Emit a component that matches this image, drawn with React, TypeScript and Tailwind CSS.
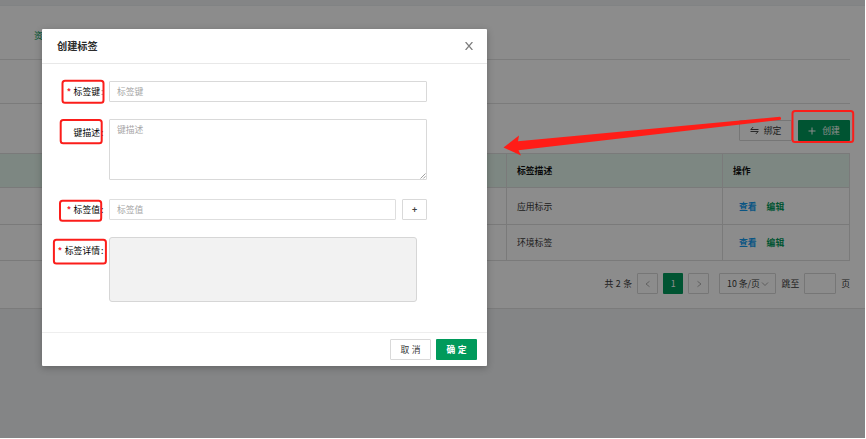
import type { ReactNode } from "react";

const rows = ["应用标示", "环境标签"];

function BackgroundPage() {
  return (
    <div className="flex h-[438px] w-[865px] flex-col overflow-hidden bg-[#f0f2f5] pt-1.5 text-[#383838]">
      <div className="flex h-[303px] shrink-0 flex-col border-b border-[#e0e0e0] bg-white pr-[15px] shadow-[0_-1px_0_#eceef0]">
        <div className="flex h-[54px] shrink-0 items-center border-b border-[#e2e2e2] pt-[6px] pl-[34px] text-[#009a5b]">
          资
        </div>
        <div className="h-11 shrink-0 border-b border-[#e0e0e0]" />
        <div className="flex h-[49px] shrink-0 items-start justify-end gap-[6px] pt-4">
          <button className="flex h-[21px] w-[53px] items-center justify-center gap-[5px] rounded-[1px] border border-[#d8d8d8]">
            <svg className="h-[9px] w-[9px]" viewBox="0 0 9 9" fill="none" stroke="currentColor" strokeWidth=".9">
              <path d="M8.5 3.5H.8L3.2 1M.5 5.5h7.7L5.8 8" />
            </svg>
            绑定
          </button>
          <button className="flex h-[21px] w-[52px] items-center justify-center gap-[6px] rounded-[1px] bg-[#009a5b] text-white">
            <svg className="h-2 w-2" viewBox="0 0 8 8" fill="none" stroke="currentColor">
              <path d="M4 .5v7M.5 4h7" />
            </svg>
            创建
          </button>
        </div>
        <div className="grid h-[108px] shrink-0 grid-cols-[506px_216px_1fr] grid-rows-[34px_37px_36px] border-t border-r border-[#dedede]">
          <Cell head />
          <Cell head left>标签描述</Cell>
          <Cell head left>操作</Cell>
          {rows.map((name) => (
            <Row key={name} name={name} />
          ))}
        </div>
        <div className="flex items-center justify-end pt-3">
          <span className="mr-[5px] [word-spacing:0.6px]">共 2 条</span>
          <span className="flex h-[21px] w-[21px] items-center justify-center rounded-[1px] border border-[#d8d8d8] text-[#a8a8a8]">
            <Chevron d="M5.5 1.3 2 4l3.5 2.7" />
          </span>
          <span className="ml-[5px] flex h-[21px] w-[20px] items-center justify-center rounded-[1px] bg-[#009a5b] text-white">1</span>
          <span className="ml-[5px] flex h-[21px] w-[21px] items-center justify-center rounded-[1px] border border-[#d8d8d8] text-[#a8a8a8]">
            <Chevron d="M2.5 1.3 6 4 2.5 6.7" />
          </span>
          <span className="ml-[10px] flex h-[21px] w-[57px] items-center justify-between rounded-[1px] border border-[#d8d8d8] pr-[6px] pl-[7px]">
            10 条/页
            <span className="text-[#a0a0a0]">
              <Chevron d="m1 2.5 3 3 3-3" />
            </span>
          </span>
          <span className="ml-[5.5px]">跳至</span>
          <span className="mr-[5px] ml-[5px] h-[21px] w-8 rounded-[1px] border border-[#d8d8d8]" />
          <span>页</span>
        </div>
      </div>
    </div>
  );
}

function Chevron({ d }: { d: string }) {
  return (
    <svg className="h-2 w-2" viewBox="0 0 8 8" fill="none" stroke="currentColor" strokeWidth=".9">
      <path d={d} />
    </svg>
  );
}

function Cell({ head, left, children }: { head?: boolean; left?: boolean; children?: ReactNode }) {
  return (
    <div
      className={`flex items-center border-b border-[#dedede] pl-[10px] ${left ? "border-l" : ""} ${
        head ? "bg-[#e4f6ed] font-bold text-[#101010]" : ""
      }`}
    >
      {children}
    </div>
  );
}

function Row({ name }: { name: string }) {
  return (
    <>
      <Cell />
      <Cell left>{name}</Cell>
      <Cell left>
        <span className="ml-[6px] font-bold text-[#149cee]">查看</span>
        <span className="ml-[10px] font-bold text-[#009a5b]">编辑</span>
      </Cell>
    </>
  );
}

function Label({ required, faintColon, children }: { required?: boolean; faintColon?: boolean; children: ReactNode }) {
  return (
    <label className="flex w-[62px] shrink-0 justify-end text-black">
      {required && <span className="mr-[2.5px] font-bold text-[#f5222d]">*</span>}
      {children}
      <span className={`ml-px w-[3px] ${faintColon ? "text-[#777]" : ""}`}>:</span>
    </label>
  );
}

function Modal() {
  return (
    <div className="absolute top-[28.5px] left-[42px] flex h-[337px] w-[445px] flex-col rounded-[1px] bg-white shadow-[0_2px_7px_rgba(0,0,0,0.25)]">
      <header className="flex h-[35px] shrink-0 items-center justify-between border-b border-[#e8e8e8] pr-[14px] pl-[15px]">
        <h1 className="text-[10.2px] font-bold text-[#2c2c2c]">创建标签</h1>
        <svg className="h-[8px] w-[8px]" viewBox="0 0 8 8" fill="none" stroke="#7c7c7c" strokeWidth="1.2">
          <path d="m.6 0 6.8 8m0-8L.6 8" />
        </svg>
      </header>
      <form className="flex flex-1 flex-col pt-[17.5px]">
        <div className="flex h-[21px] items-center gap-[5px]">
          <Label required faintColon>标签键</Label>
          <div className="flex h-[21px] w-[318px] items-center rounded-[1px] border border-[#d9d9d9] pl-[7px] text-[#a6a6a6]">标签键</div>
        </div>
        <div className="mt-[17px] flex h-[61px] gap-[5px]">
          <div className="flex h-[26px] items-center">
            <Label>键描述</Label>
          </div>
          <div className="flex h-[61px] w-[318px] items-start justify-between rounded-[1px] border border-[#d9d9d9] pt-[3px] pl-[7px] text-[#a6a6a6]">
            键描述
            <svg className="h-[6px] w-[6px] self-end" viewBox="0 0 6 6" fill="none" stroke="#777" strokeWidth=".7">
              <path d="M.5 5.5l5-5M3.3 5.5l2.2-2.2" />
            </svg>
          </div>
        </div>
        <div className="mt-[19px] flex h-[21px] items-center">
          <Label required>标签值</Label>
          <div className="ml-[5px] flex h-[21px] w-[287px] items-center rounded-[1px] border border-[#dedede] pl-[7px] text-[#a6a6a6]">标签值</div>
          <div className="ml-[6px] flex h-[21px] w-[25px] items-center justify-center rounded-[1px] border border-[#d9d9d9] font-bold text-[#404040]">+</div>
        </div>
        <div className="mt-[17px] flex h-[65px] gap-[5px]">
          <div className="flex h-[26px] items-center">
            <Label required>标签详情</Label>
          </div>
          <div className="h-[65px] w-[308px] rounded-[3px] border border-[#d6d6d6] bg-[#f2f2f2]" />
        </div>
      </form>
      <footer className="flex h-[34px] shrink-0 items-center justify-end gap-[5px] border-t border-[#eeeeee] pr-[10px]">
        <button className="h-[21px] w-[41px] rounded-[1px] border border-[#d9d9d9] text-[#3a3a3a] [word-spacing:0.5px]">取 消</button>
        <button className="h-[21px] w-[41px] rounded-[1px] bg-[#009a5b] font-bold text-white [word-spacing:0.5px]">确 定</button>
      </footer>
    </div>
  );
}

function Annotations() {
  return (
    <svg className="pointer-events-none absolute inset-0" width="865" height="438" viewBox="0 0 865 438">
      <path
        d="M503.5 147.5 519 135.5 518 141.3 780 116.7Q781.7 118 780.6 119.8L518.5 150.2 521 155.5Z"
        fill="#ff1d17"
      />
      <g fill="none" stroke="#fb1d1a" strokeWidth="2">
        <rect x="62.5" y="80.7" width="41" height="22" rx="2.5" />
        <rect x="60.7" y="120" width="41" height="23.3" rx="2.5" />
        <rect x="60" y="200.8" width="41.2" height="19.9" rx="2.5" />
        <rect x="53.9" y="239.8" width="52" height="23.7" rx="2.5" />
        <rect x="792.5" y="111" width="60.7" height="31" rx="2.5" />
      </g>
    </svg>
  );
}

export default function App() {
  return (
    <main className="h-[439px] w-[866px] overflow-hidden bg-white font-['Noto_Sans_CJK_SC','Liberation_Sans',sans-serif] text-[8.8px] leading-[13px] whitespace-nowrap">
      <div className="relative h-[438px] w-[865px] overflow-hidden">
        <BackgroundPage />
        <div className="absolute inset-0 bg-black/45" />
        <Modal />
        <Annotations />
      </div>
    </main>
  );
}
